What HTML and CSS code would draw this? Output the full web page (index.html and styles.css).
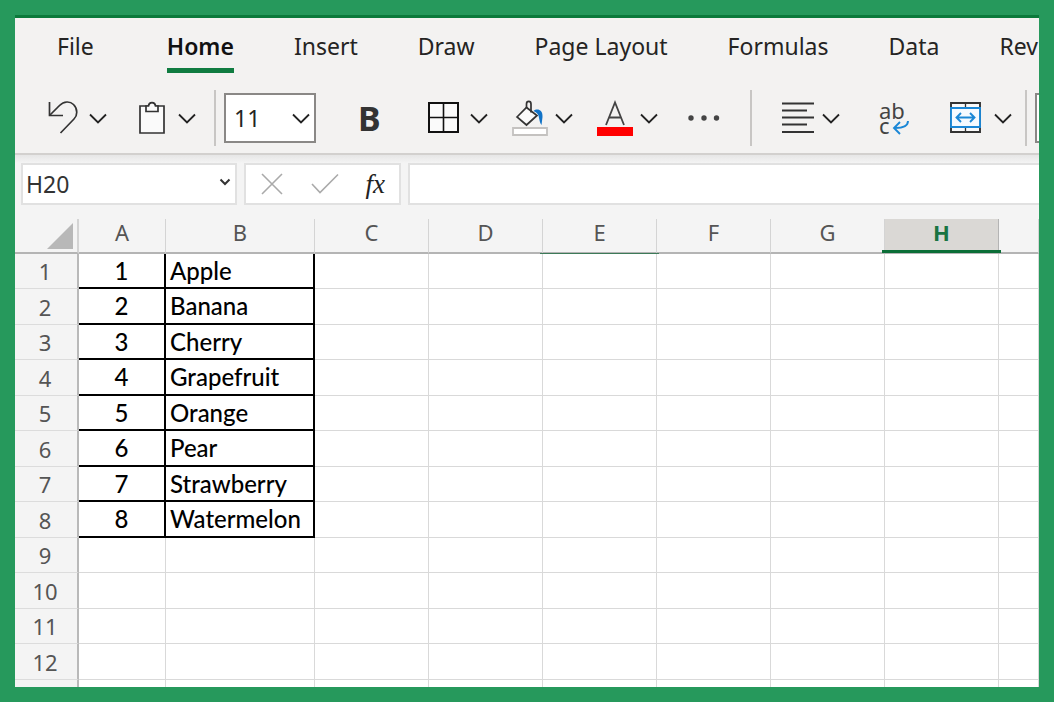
FILE: index.html
```html
<!DOCTYPE html>
<html lang="en">
<head>
    <meta charset="UTF-8">
    <meta name="viewport" content="width=device-width, initial-scale=1.0">
    <title>Spreadsheet</title>
    <link rel="stylesheet" href="styles.css">
</head>
<body>
    <svg class="symbols" width="0" height="0">
        <symbol id="chevron" viewBox="0 0 18 11">
            <path d="M1 1.5L9 9.5L17 1.5" fill="none" stroke="#222" stroke-width="1.8"/>
        </symbol>
    </svg>
    <div class="app">
        <nav class="tabs">
            <a href="#" class="tab file">File</a>
            <a href="#" class="tab active">Home</a>
            <a href="#" class="tab">Insert</a>
            <a href="#" class="tab">Draw</a>
            <a href="#" class="tab">Page Layout</a>
            <a href="#" class="tab">Formulas</a>
            <a href="#" class="tab">Data</a>
            <a href="#" class="tab">Review</a>
        </nav>

        <div class="toolbar">
            <div class="section history">
                <div class="split">
                    <button type="button" aria-label="Undo">
                        <svg width="30" height="34" viewBox="0 0 30 34" fill="none" stroke="#333" stroke-width="1.7">
                            <path d="M1.5 1V14.5H15"/>
                            <path d="M1.5 14.5L11.5 4.5C16 0 22 0 25.5 3.5C30 8 29.5 14.5 26 18L12.5 32"/>
                        </svg>
                    </button>
                    <button type="button" aria-label="Undo options"><svg width="18" height="11"><use href="#chevron"/></svg></button>
                </div>
                <div class="split wide">
                    <button type="button" aria-label="Paste">
                        <svg width="26" height="34" viewBox="0 0 26 34" stroke="#333" stroke-width="1.7">
                            <path d="M1 5H25V32H1Z" fill="#fafafa"/>
                            <path d="M7 5H9.5C10 0.5 16 0.5 16.5 5H19V10.5H7Z" fill="#fafafa"/>
                        </svg>
                    </button>
                    <button type="button" aria-label="Paste options"><svg width="18" height="11"><use href="#chevron"/></svg></button>
                </div>
            </div>
            <div class="section font">
                <div class="size-box">
                    <select class="size" aria-label="Font size">
                        <option>11</option>
                        <option>12</option>
                        <option>14</option>
                    </select>
                    <svg class="size-arrow" width="18" height="11"><use href="#chevron"/></svg>
                </div>
                <button type="button" class="bold" aria-label="Bold">B</button>
                <div class="split">
                    <button type="button" aria-label="Borders">
                        <svg width="31" height="34" viewBox="0 0 31 34" stroke="#111" stroke-width="2">
                            <path d="M1 2H30V31H1Z" fill="#fafafa"/>
                            <path d="M15.5 2V31M1 16.5H30" stroke-width="1.6"/>
                        </svg>
                    </button>
                    <button type="button" aria-label="Border options"><svg width="18" height="11"><use href="#chevron"/></svg></button>
                </div>
                <div class="split tight">
                    <button type="button" aria-label="Fill color">
                        <svg width="36" height="36" viewBox="0 0 36 36" fill="none">
                            <path d="M5 17L14.5 7.5L25 15.5L14.5 25Z" fill="#fafafa" stroke="#333" stroke-width="1.7"/>
                            <path d="M14.5 8V4C14.5 0.5 19 0.5 19 4V12.5" stroke="#333" stroke-width="1.7"/>
                            <path d="M21.5 11C25 8 31 9.5 30.5 17L29.5 25C28 23.5 27.5 20 26.5 15.5C25.5 13 23.5 12 21.5 11Z" fill="#1173c7"/>
                            <path d="M1 28H35V35H1Z" fill="#fff" stroke="#c4c2c0" stroke-width="1.8"/>
                        </svg>
                    </button>
                    <button type="button" aria-label="Fill color options"><svg width="18" height="11"><use href="#chevron"/></svg></button>
                </div>
                <div class="split tight">
                    <button type="button" aria-label="Font color">
                        <svg width="36" height="36" viewBox="0 0 36 36" fill="none">
                            <path d="M9 25L18 2.5L27 25M12 17.5H24" stroke="#444" stroke-width="1.8"/>
                            <path d="M0 27H36V36H0Z" fill="#f00"/>
                        </svg>
                    </button>
                    <button type="button" aria-label="Font color options"><svg width="18" height="11"><use href="#chevron"/></svg></button>
                </div>
                <button type="button" class="more" aria-label="More font options">
                    <svg width="32" height="8" viewBox="0 0 32 8" fill="#444">
                        <circle cx="3" cy="4" r="2.7"/>
                        <circle cx="16" cy="4" r="2.7"/>
                        <circle cx="28.500" cy="4" r="2.7"/>
                    </svg>
                </button>
            </div>
            <div class="section align">
                <div class="split tight">
                    <button type="button" aria-label="Align">
                        <svg width="34" height="34" viewBox="0 0 34 34" stroke="#333" stroke-width="1.8">
                            <path d="M1 2.5H33M1 9.5H26M1 16.5H33M1 23.5H26M1 31H33"/>
                        </svg>
                    </button>
                    <button type="button" aria-label="Align options"><svg width="18" height="11"><use href="#chevron"/></svg></button>
                </div>
                <button type="button" aria-label="Wrap text">
                    <svg class="wrap-icon" width="32" height="34" viewBox="0 0 32 34">
                        <text class="wrap-letters"><tspan x="0" y="18">ab</tspan><tspan x="0" y="33">c</tspan></text>
                        <path d="M29 20C29 25 25 27 16 27M21 21L15 27L21 33" fill="none" stroke="#1b87d6" stroke-width="1.9"/>
                    </svg>
                </button>
                <div class="split wide">
                    <button type="button" aria-label="Merge cells">
                        <svg width="31" height="34" viewBox="0 0 31 34" fill="none" stroke-width="1.9">
                            <path d="M1 2H30V31H1Z" fill="#fafafa" stroke="#333"/>
                            <path d="M15.5 2V7M15.5 26V31" stroke="#333" stroke-width="1.3"/>
                            <path d="M1 7H30V26H1Z" fill="#f5faff" stroke="#1b87d6"/>
                            <path d="M7 16.5H24M11 12L6.5 16.5L11 21M20 12L24.5 16.5L20 21" stroke="#1b87d6"/>
                        </svg>
                    </button>
                    <button type="button" aria-label="Merge options"><svg width="18" height="11"><use href="#chevron"/></svg></button>
                </div>
            </div>
            <div class="section number">
                <select class="format" aria-label="Number format">
                    <option></option>
                </select>
            </div>
        </div>

        <div class="formula-bar">
            <div class="name-box">
                <input type="text" class="name" aria-label="Name box" value="H20" spellcheck="false">
                <button type="button" aria-label="Named ranges">
                    <svg width="12" height="9" viewBox="0 0 12 9"><path d="M1.5 1.5L6 6L10.5 1.5" fill="none" stroke="#333" stroke-width="2"/></svg>
                </button>
            </div>
            <div class="actions">
                <button type="button" aria-label="Cancel">
                    <svg width="24" height="24" viewBox="0 0 24 24"><path d="M2 2L22 22M22 2L2 22" stroke="#aaa" stroke-width="1.6"/></svg>
                </button>
                <button type="button" aria-label="Enter">
                    <svg width="28" height="24" viewBox="0 0 28 24"><path d="M1 12L9 20.5L27 2.5" fill="none" stroke="#aaa" stroke-width="1.6"/></svg>
                </button>
                <button type="button" class="fx" aria-label="Insert function">fx</button>
            </div>
            <input type="text" class="formula" aria-label="Formula">
        </div>

        <div class="sheet">
            <table class="grid">
                <colgroup>
                    <col class="col-head">
                    <col class="col-a">
                    <col class="col-b">
                    <col class="col" span="6">
                    <col>
                </colgroup>
                <thead>
                    <tr>
                        <th class="corner"><svg width="28" height="28" viewBox="0 0 28 28"><path d="M27 1V27H1Z" fill="#b8b8b8"/></svg></th>
                        <th>A</th><th>B</th><th>C</th><th>D</th><th class="edge">E</th><th>F</th><th>G</th><th class="selected">H</th><th></th>
                    </tr>
                </thead>
                <tbody>
                    <tr><th>1</th><td class="num">1</td><td class="fruit">Apple</td><td></td><td></td><td></td><td></td><td></td><td></td><td></td></tr>
                    <tr><th>2</th><td class="num">2</td><td class="fruit">Banana</td><td></td><td></td><td></td><td></td><td></td><td></td><td></td></tr>
                    <tr><th>3</th><td class="num">3</td><td class="fruit">Cherry</td><td></td><td></td><td></td><td></td><td></td><td></td><td></td></tr>
                    <tr><th>4</th><td class="num">4</td><td class="fruit">Grapefruit</td><td></td><td></td><td></td><td></td><td></td><td></td><td></td></tr>
                    <tr><th>5</th><td class="num">5</td><td class="fruit">Orange</td><td></td><td></td><td></td><td></td><td></td><td></td><td></td></tr>
                    <tr><th>6</th><td class="num">6</td><td class="fruit">Pear</td><td></td><td></td><td></td><td></td><td></td><td></td><td></td></tr>
                    <tr><th>7</th><td class="num">7</td><td class="fruit">Strawberry</td><td></td><td></td><td></td><td></td><td></td><td></td><td></td></tr>
                    <tr><th>8</th><td class="num">8</td><td class="fruit">Watermelon</td><td></td><td></td><td></td><td></td><td></td><td></td><td></td></tr>
                    <tr><th>9</th><td></td><td></td><td></td><td></td><td></td><td></td><td></td><td></td><td></td></tr>
                    <tr><th>10</th><td></td><td></td><td></td><td></td><td></td><td></td><td></td><td></td><td></td></tr>
                    <tr><th>11</th><td></td><td></td><td></td><td></td><td></td><td></td><td></td><td></td><td></td></tr>
                    <tr><th>12</th><td></td><td></td><td></td><td></td><td></td><td></td><td></td><td></td><td></td></tr>
                    <tr><th></th><td></td><td></td><td></td><td></td><td></td><td></td><td></td><td></td><td></td></tr>
                </tbody>
            </table>
        </div>
    </div>
</body>
</html>
```
FILE: styles.css
```css
*{
    margin: 0;
    padding: 0;
    box-sizing: border-box;
}
body{
    height: 100vh;
    padding: 15px;
    background-color: #26995c;
    font-family: 'Noto Sans', 'Open Sans', sans-serif;
    color: #252423;
}
button{
    display: flex;
    align-items: center;
    background: none;
    border: none;
    color: inherit;
    cursor: pointer;
}
button, input, select{
    font-family: inherit;
    outline: none;
}
svg{
    display: block;
    flex-shrink: 0;
}
.symbols{
    position: absolute;
}
.app{
    height: 100%;
    display: flex;
    flex-direction: column;
    overflow: hidden;
    background-color: #f4f4f4;
    border-top: 3px solid #0b7a3b;
}

/* ribbon tabs */
.tabs{
    display: flex;
    gap: 60px;
    padding: 12px 0 0 42px;
    background-color: #f3f2f1;
    white-space: nowrap;
}
.tab{
    height: 43px;
    font-size: 23px;
    line-height: 33px;
    color: inherit;
    text-decoration: none;
}
.file{
    margin-right: 13px;
}
.active{
    font-weight: 600;
    color: #111;
    border-bottom: 5px solid #107c41;
}

/* toolbar */
.toolbar{
    display: flex;
    align-items: center;
    height: 82px;
    padding-top: 10px;
    background-color: #f3f2f1;
    border-bottom: 2px solid #d2d0ce;
}
.section{
    display: flex;
    align-items: center;
    flex-shrink: 0;
    height: 56px;
    border-right: 2px solid #c8c6c4;
}
.split{
    display: flex;
    align-items: center;
    gap: 11px;
}
.wide{
    gap: 13px;
}
.tight{
    gap: 7px;
}
.history{
    gap: 32px;
    padding: 0 18px 0 33px;
}
.font{
    gap: 24px;
    padding: 0 30px 0 8px;
}
.align{
    gap: 39px;
    padding: 0 13px 0 29px;
}
.number{
    border: none;
    padding-left: 8px;
}
.size-box{
    position: relative;
}
.size, .format{
    appearance: none;
    width: 92px;
    height: 50px;
    padding-left: 8px;
    font-size: 23px;
    color: #252423;
    background-color: #fff;
    border: 2px solid #8a8886;
    border-radius: 0;
}
.format{
    width: 180px;
}
.size-arrow{
    position: absolute;
    right: 6px;
    top: 20px;
    pointer-events: none;
}
.bold{
    padding: 0 23px 0 18px;
    font-size: 34px;
    line-height: 40px;
    font-weight: 700;
    color: #333;
}
.more{
    padding-left: 6px;
}
.wrap-icon{
    overflow: visible;
}
.wrap-letters{
    font-size: 22px;
    fill: #444;
}

/* formula bar */
.formula-bar{
    display: flex;
    gap: 7px;
    padding: 8px 0 14px 6px;
    background-image: linear-gradient(#e6e6e6, #f4f4f4 8px);
}
.name-box, .actions, .formula{
    height: 42px;
    background-color: #fff;
    border: 2px solid #e1e1e1;
}
.name-box{
    display: flex;
    width: 216px;
    padding-right: 4px;
    flex-shrink: 0;
}
.name{
    flex: 1;
    min-width: 0;
    padding-left: 3px;
    border: none;
    font-size: 23px;
    color: #333;
}
.name-box button{
    padding-bottom: 4px;
}
.actions{
    display: flex;
    align-items: center;
    justify-content: space-between;
    width: 157px;
    padding: 0 14px;
    flex-shrink: 0;
}
.fx{
    font-family: 'Liberation Serif', serif;
    font-style: italic;
    font-size: 27px;
    color: #222;
}
.formula{
    flex: 1;
    min-width: 0;
    border-right: none;
    padding: 0 8px;
    font-size: 23px;
}

/* sheet */
.sheet{
    flex: 1;
    min-height: 0;
    overflow: hidden;
}
.grid{
    width: 100%;
    table-layout: fixed;
    border-spacing: 0;
    font-size: 22px;
    line-height: 30px;
}
.col-head{
    width: 64px;
}
.col-a{
    width: 87px;
}
.col-b{
    width: 149px;
}
.col{
    width: 114px;
}
.grid tr{
    height: 35px;
}
.grid tbody tr:nth-child(even){
    height: 36px;
}
.grid th{
    font-weight: 400;
    color: #555;
    background-color: #f4f4f4;
}
.grid thead th{
    position: relative;
    padding-bottom: 7px;
    line-height: 26px;
    border-right: 1px solid #d4d4d4;
    border-bottom: 2px solid #b4b4b4;
}
.grid thead .corner{
    border-right: 2px solid #d4d4d4;
    padding: 2px 3px 2px 0;
}
.corner svg{
    margin-left: auto;
}
.grid tbody th{
    padding-right: 2px;
    border-right: 2px solid #b9b9b9;
    border-bottom: 1px solid #dcdcdc;
}
.grid td{
    background-color: #fff;
    border-right: 1px solid #d9d9d9;
    border-bottom: 1px solid #d9d9d9;
}
.grid .num, .grid .fruit{
    font-family: Lato, sans-serif;
    font-size: 24px;
    font-weight: 500;
    color: #000;
    border-right: 2px solid #000;
    border-bottom: 2px solid #000;
}
.num{
    text-align: center;
}
.fruit{
    padding-left: 4px;
}
.grid thead .selected{
    font-weight: 700;
    color: #1a7443;
    background-color: #dad8d5;
    border-right-color: #b4b4b4;
}
.edge::after, .selected::after{
    content: "";
    position: absolute;
    z-index: 1;
    left: -3px;
    right: -3px;
    bottom: -2px;
    height: 1px;
    background-color: #3c7a58;
}
.selected::after{
    bottom: -1px;
    height: 3px;
    background-color: #0b6e37;
}
```
